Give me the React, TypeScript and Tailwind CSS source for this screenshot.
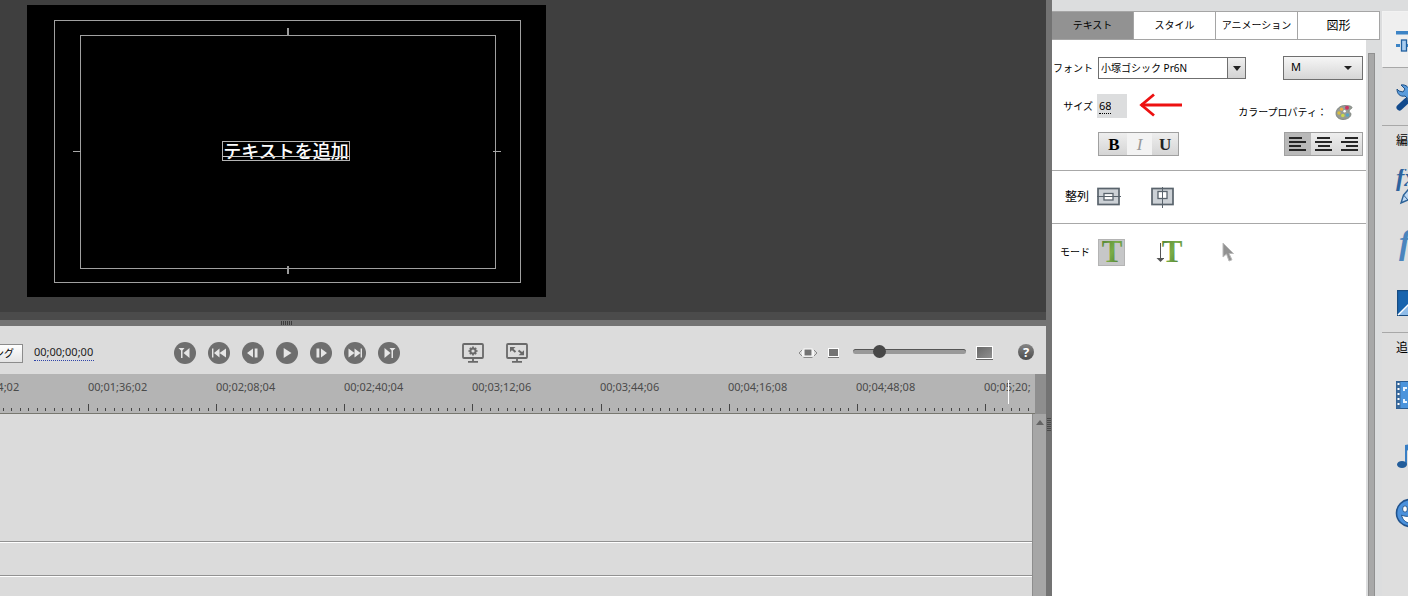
import React from "react";

const ui = "font-['Noto_Sans','Noto_Sans_CJK_JP',sans-serif]";

const ROUND = "flex size-[22px] shrink-0 items-center justify-center rounded-full bg-[#6e6e6e]";

function Transport({ label, children }: { label: string; children: React.ReactNode }) {
  return (
    <button type="button" aria-label={label} className={ROUND}>
      <svg width="22" height="22" viewBox="0 0 22 22" fill="#e6e6e6">
        {children}
      </svg>
    </button>
  );
}

function TransportControls() {
  return (
    <div className="flex gap-3">
      <Transport label="Go to in point">
        <path d="M4.500 6h6L8.500 8.500V16H7V8.500z" />
        <path d="M15.500 6v10L9.500 11z" />
      </Transport>
      <Transport label="Previous edit">
        <path d="M4 6.500h1.400v9H4zM11.500 6.500v9L6 11zM18 6.500v9L11.500 11z" />
      </Transport>
      <Transport label="Step back">
        <path d="M11 6.500v9L5 11zM12.700 6.500h2.800v9h-2.800z" />
      </Transport>
      <Transport label="Play">
        <path d="M7.700 6v10L15.500 11z" />
      </Transport>
      <Transport label="Step forward">
        <path d="M6.500 6.500h2.800v9H6.500zM11 6.500v9l6-4.500z" />
      </Transport>
      <Transport label="Next edit">
        <path d="M4.500 6.500v9L10.500 11zM10.500 6.500v9L16.500 11zM16.600 6.500H18v9h-1.400z" />
      </Transport>
      <Transport label="Go to out point">
        <path d="M17.500 6h-6l2 2.500V16H15V8.500z" />
        <path d="M6.500 6v10l6-5z" />
      </Transport>
    </div>
  );
}

function Monitor() {
  return (
    <section className="flex min-h-0 flex-[0_0_312px] bg-[#3f3f3f] pt-[5px] pl-[27px]">
      <div className="flex h-[292px] w-[519px] bg-black pt-[15px] pr-[25px] pb-[14px] pl-[27px]">
        <div className="flex flex-1 border border-[#a0a0a0] pt-[14px] pr-[24px] pb-[13px] pl-[25px]">
          <div className="relative flex flex-1 items-center justify-center border border-[#a0a0a0] pr-1">
            <i className="absolute -top-2 left-[206px] h-2 w-0.5 bg-[#9a9a9a]" />
            <i className="absolute -bottom-1.5 left-[206px] h-2 w-0.5 bg-[#9a9a9a]" />
            <i className="absolute top-[115px] -left-2 h-px w-2 bg-[#a8a8a8]" />
            <i className="absolute top-[115px] -right-1.5 h-px w-2 bg-[#a8a8a8]" />
            <div className="relative mb-0.5 flex h-5 items-center border border-[#b4b4b4] pb-0.5 text-lg leading-none font-medium whitespace-nowrap text-white font-['Noto_Sans_CJK_JP',sans-serif]">
              <span>テキストを追加</span>
              <i className="absolute inset-x-0 bottom-[3px] h-px bg-[#c8c8c8]" />
            </div>
          </div>
        </div>
      </div>
    </section>
  );
}

function PlaybackBar() {
  return (
    <div className="flex h-12 shrink-0 items-center bg-[#dcdcdc] pt-1.5 pr-3">
      <button
        type="button"
        className="-ml-[57px] flex h-[19px] w-20 shrink-0 items-center justify-end border border-[#8c8c8c] bg-gradient-to-b from-white to-[#e4e4e4] pr-2 text-[10px] whitespace-nowrap text-black"
      >
        レンダリング
      </button>
      <div className="ml-[11px] h-[15px] w-[60px] border-b border-dotted border-[#2f44a8] text-[11px] leading-[12px] whitespace-nowrap text-[#222]">
        00;00;00;00
      </div>
      <div className="ml-20">
        <TransportControls />
      </div>
      <div className="ml-[62px] flex gap-[22px]">
        <button type="button" aria-label="Playback settings">
          <svg width="22" height="20" viewBox="0 0 22 20" fill="none" stroke="#696969">
            <rect x="1" y="1" width="20" height="14" rx="1" strokeWidth="1.8" />
            <path d="M11 15v3M6 18.800h10" strokeWidth="1.8" />
            <circle cx="11" cy="8" r="2.600" strokeWidth="2" />
            <path d="M11 3.400v1.800M11 10.800v1.800M6.400 8h1.800M13.800 8h1.800M7.800 4.800l1.200 1.200M13 10l1.200 1.200M14.200 4.800L13 6M9 10l-1.200 1.200" strokeWidth="1.700" />
          </svg>
        </button>
        <button type="button" aria-label="Full screen">
          <svg width="22" height="20" viewBox="0 0 22 20" fill="none" stroke="#696969">
            <rect x="1" y="1" width="20" height="14" rx="1" strokeWidth="1.8" />
            <path d="M11 15v3M6 18.800h10" strokeWidth="1.8" />
            <path d="M5 5l4.500 4M12.500 7.500L17 11" strokeWidth="2" />
            <path d="M4 4h5.500L4 9zM18 12.200h-5.500l5.500-5z" fill="#696969" stroke="none" />
          </svg>
        </button>
      </div>
      <div className="ml-auto flex items-center">
        <button type="button" aria-label="Fit timeline">
          <svg width="20" height="12" viewBox="0 0 20 12">
            <rect x="6" y="2" width="8" height="7" fill="#747474" stroke="#fff" />
            <path d="M5.500 10.500h9M4 3L1 6l3 3M16 3l3 3-3 3" fill="none" stroke="#8a8a8a" />
            <path d="M4.800 3v6M15.200 3v6" stroke="#fff" strokeWidth="1.200" />
          </svg>
        </button>
        <button type="button" aria-label="Zoom out" className="ml-2.5">
          <svg width="11" height="12" viewBox="0 0 11 12">
            <rect x="0.500" y="1.500" width="10" height="8" fill="#747474" stroke="#fff" />
            <path d="M0 10.500h11" stroke="#777" />
          </svg>
        </button>
        <input
          type="range"
          aria-label="Timeline zoom"
          defaultValue={20}
          className="ml-3.5 mb-1 h-[5px] w-[113px] appearance-none rounded-full border-t border-[#555] bg-[#999] [&::-webkit-slider-thumb]:size-[13px] [&::-webkit-slider-thumb]:appearance-none [&::-webkit-slider-thumb]:rounded-full [&::-webkit-slider-thumb]:bg-[#484848]"
        />
        <button type="button" aria-label="Zoom in" className="ml-2.5">
          <svg width="17" height="14" viewBox="0 0 17 14">
            <defs>
              <linearGradient id="zoomIn" x2="1" y2="1">
                <stop stopColor="#666" />
                <stop offset="1" stopColor="#929292" />
              </linearGradient>
            </defs>
            <rect x="0.500" y="0.500" width="16" height="12" fill="url(#zoomIn)" stroke="#fff" />
            <path d="M0 13.500h17" stroke="#666" />
          </svg>
        </button>
        <button
          type="button"
          aria-label="Help"
          className="ml-[25px] mb-0.5 flex size-4 items-center justify-center rounded-full bg-gradient-to-b from-[#858585] to-[#4d4d4d] text-[13px] leading-4 font-bold text-white"
        >
          ?
        </button>
      </div>
    </div>
  );
}

const TIMES = [
  "00;01;04;02",
  "00;01;36;02",
  "00;02;08;04",
  "00;02;40;04",
  "00;03;12;06",
  "00;03;44;06",
  "00;04;16;08",
  "00;04;48;08",
  "00;05;20;",
];

function Ruler() {
  const step = 128.15 / 15;
  const ticks = Array.from({ length: 130 }, (_, i) => i - 10);
  return (
    <div className="flex h-10 shrink-0 bg-[#8e8e8e]">
      <div className="relative flex flex-1 flex-col overflow-hidden border-b border-[#77776f] bg-[#b4b4b4]">
        <div className="-ml-10 flex pt-[5px] text-[11px] leading-4 text-[#4a4a4a]">
          {TIMES.map((t) => (
            <span key={t} className="w-32 shrink-0">
              {t}
            </span>
          ))}
        </div>
        <svg width="1035" height="8" className="mt-auto mb-0.5 block shrink-0" stroke="#454545">
          {ticks.map((i) => {
            const x = Math.round(88 + i * step) + 0.5;
            return <path key={i} d={i % 15 === 0 ? `M${x} 1v7` : `M${x} 5v3`} />;
          })}
        </svg>
        <i className="absolute top-1.5 right-[26px] h-6 w-px bg-white" />
      </div>
      <div className="w-[11px]" />
    </div>
  );
}

function Timeline() {
  return (
    <div className="flex min-h-0 flex-1 bg-[#dbdbdb]">
      <div className="flex flex-1 flex-col">
        <div className="h-32 border-b border-[#929292]" />
        <div className="h-[34px] border-t border-b border-t-white border-b-[#929292]" />
        <div className="flex-1 border-t border-white" />
      </div>
      <div className="flex w-3.5 justify-center border-l border-[#8d8d8d] bg-[#a6a6a6] pt-1.5">
        <svg width="8" height="5" viewBox="0 0 8 5">
          <path d="M4 0l4 5H0z" fill="#646464" />
        </svg>
      </div>
    </div>
  );
}

const LABEL = "w-10 shrink-0 text-right text-[10px] whitespace-nowrap";

function Bars({ x }: { x: number[] }) {
  return (
    <svg width="18" height="14" viewBox="0 0 18 14" fill="#262626">
      {[0, 4, 8, 12].map((y, i) => {
        const w = i % 2 === 0 ? (i === 0 ? 13 : 12) : 17;
        return <rect key={y} x={x[i]} y={y} width={w} height="2" />;
      })}
    </svg>
  );
}

function GreenT() {
  return (
    <svg width="24" height="24" viewBox="0 0 24 24">
      <defs>
        <linearGradient id="green" x2="1" y2="1">
          <stop stopColor="#4d7c33" />
          <stop offset="0.500" stopColor="#79ad48" />
          <stop offset="1" stopColor="#416c2a" />
        </linearGradient>
      </defs>
      <text x="12" y="22" textAnchor="middle" fill="url(#green)" className="font-['Liberation_Serif',serif] text-[31px] font-bold">
        T
      </text>
    </svg>
  );
}

function Palette() {
  return (
    <svg width="18" height="17" viewBox="0 0 18 17">
      <path
        d="M10 1.500C5 1.500 1 5 1 9.500 1 13 4 15.500 8 15.500c4.500 0 8-2.500 8-5.500 0-1.500-2-1.500-2-3s3-2 3-3.500c0-1.300-3-2-7-2z"
        fill="#969b95"
        stroke="#777d77"
        strokeWidth=".8"
      />
      <circle cx="12" cy="3.800" r="2" fill="#c93460" />
      <circle cx="6.500" cy="5.200" r="1.600" fill="#efaa43" />
      <circle cx="4" cy="9" r="1.700" fill="#d7bd3f" />
      <circle cx="7.800" cy="11.500" r="1.800" fill="#cbd84a" />
      <circle cx="12.500" cy="11" r="1.800" fill="#55a4c4" />
      <circle cx="9.600" cy="7.300" r="1.200" fill="#fff" />
    </svg>
  );
}

const TAB = "h-full flex-1 border-r border-[#a5a5a5] text-[10px] whitespace-nowrap";

function TextPanel() {
  return (
    <div className="flex w-[328px] shrink-0 flex-col">
      <div role="tablist" className="flex h-[29px] shrink-0 border-t border-b border-[#a5a5a5] bg-white">
        <button type="button" role="tab" aria-selected="true" className="h-full flex-1 border-r border-[#a5a5a5] bg-[#929292] text-[10px]">
          テキスト
        </button>
        <button type="button" role="tab" className={TAB}>
          スタイル
        </button>
        <button type="button" role="tab" className={TAB}>
          アニメーション
        </button>
        <button type="button" role="tab" className="h-full flex-1 border-r border-[#a5a5a5] text-xs">
          図形
        </button>
      </div>
      <div className="flex min-h-0 flex-1">
        <div className="flex flex-1 flex-col bg-white">
          <div className="flex h-[131px] shrink-0 flex-col border-b border-[#a8a8a8] pt-4 pr-[3px] pl-px">
            <div className="flex h-6 items-center">
              <label htmlFor="font" className={LABEL}>
                フォント
              </label>
              <div className="ml-[5px] flex h-[22px] w-[148px] border border-[#6f6f6f]">
                <input
                  id="font"
                  defaultValue="小塚ゴシック Pr6N"
                  className="w-0 flex-1 bg-white pl-0.5 text-[10px] outline-none"
                />
                <button
                  type="button"
                  aria-label="Show fonts"
                  className="flex w-[18px] items-center justify-center border-l border-[#6f6f6f] bg-gradient-to-b from-[#efefef] to-[#d2d2d2]"
                >
                  <svg width="8" height="5" viewBox="0 0 8 5">
                    <path d="M0 0h8L4 5z" fill="#222" />
                  </svg>
                </button>
              </div>
              <div className="relative ml-auto h-6 w-20">
                <select
                  aria-label="Font style"
                  className="block size-full appearance-none border border-[#6f6f6f] bg-gradient-to-b from-[#f6f6f6] to-[#d6d6d6] pb-0.5 pl-[7px] text-[11px]"
                >
                  <option>M</option>
                </select>
                <svg width="8" height="4" viewBox="0 0 8 4" className="pointer-events-none absolute top-2.5 right-[11px]">
                  <path d="M0 0h8L4 4z" fill="#222" />
                </svg>
              </div>
            </div>
            <div className="mt-3.5 flex h-6 items-center">
              <label htmlFor="size" className={LABEL}>
                サイズ
              </label>
              <div className="ml-1 flex h-6 w-[30px] items-center bg-[#dcddde] pl-0.5">
                <input
                  id="size"
                  defaultValue="68"
                  className="h-[15px] w-3 border-b border-dotted border-black bg-transparent text-[11px] leading-[14px] outline-none"
                />
              </div>
              <svg width="44" height="24" viewBox="0 0 44 24" className="ml-3 mb-0.5" fill="none" stroke="#ed1111">
                <path d="M2 12h41" strokeWidth="3" />
                <path d="M15 1.500L2.500 12 15 22.500" strokeWidth="2.800" />
              </svg>
              <div className="mt-3 ml-auto flex items-center text-[10px] whitespace-nowrap">
                <span>カラープロパティ：</span>
                <button type="button" aria-label="Color properties" className="mr-2.5 ml-2">
                  <Palette />
                </button>
              </div>
            </div>
            <div className="mt-3.5 flex h-6 items-center justify-between pl-[45px]">
              <div className="flex h-6 w-[81px] border border-[#a0a0a0] bg-gradient-to-b from-[#eee] to-[#d5d5d5] font-['Liberation_Serif',serif] text-[17px] leading-none">
                <button type="button" className="flex-1 pl-0.5 font-bold">
                  B
                </button>
                <button type="button" className="flex-1 bg-[#f3f3f3] text-[#999] italic">
                  I
                </button>
                <button type="button" className="flex-1 font-bold text-[#222]">
                  U
                </button>
              </div>
              <div className="flex h-6 w-[79px] border border-[#a0a0a0] bg-gradient-to-b from-[#eee] to-[#d5d5d5]">
                <button type="button" aria-label="Align left" className="flex flex-1 items-center justify-center bg-[#b9b9b9]">
                  <Bars x={[0, 0, 0, 0]} />
                </button>
                <button type="button" aria-label="Align center" className="flex flex-1 items-center justify-center">
                  <Bars x={[2, 0, 3, 0]} />
                </button>
                <button type="button" aria-label="Align right" className="flex flex-1 items-center justify-center">
                  <Bars x={[5, 1, 6, 1]} />
                </button>
              </div>
            </div>
          </div>

          <div className="flex h-[53px] shrink-0 items-center border-b border-[#a8a8a8] pl-px">
            <span className="w-9 text-right text-xs">整列</span>
            <button type="button" aria-label="Center vertically" className="ml-2">
              <svg width="24" height="22" viewBox="0 0 24 22">
                <rect x="1" y="2.500" width="21" height="16" fill="#ccd1d6" stroke="#59636c" strokeWidth="1.700" />
                <rect x="7" y="7.500" width="9" height="6.500" fill="#fff" stroke="#59636c" strokeWidth="1.300" />
                <path d="M0 10.500h24" stroke="#59636c" />
              </svg>
            </button>
            <button type="button" aria-label="Center horizontally" className="ml-[30px]">
              <svg width="24" height="22" viewBox="0 0 24 22">
                <rect x="1" y="2.500" width="21" height="16" fill="#ccd1d6" stroke="#59636c" strokeWidth="1.700" />
                <rect x="7" y="5.500" width="9" height="7" fill="#fff" stroke="#59636c" strokeWidth="1.300" />
                <path d="M11.500 1v21" stroke="#59636c" />
              </svg>
            </button>
          </div>

          <div className="flex h-14 shrink-0 items-center pl-px">
            <span className="w-[37px] text-right text-[10px]">モード</span>
            <button
              type="button"
              aria-label="Horizontal text"
              className="ml-2 flex size-[27px] items-center justify-center border border-[#b4b4b4] bg-[#c6c7c8]"
            >
              <GreenT />
            </button>
            <button type="button" aria-label="Vertical text" className="ml-[31px] flex items-center">
              <svg width="8" height="24" viewBox="0 0 8 24" className="-mr-1">
                <path d="M4.500 3v16" stroke="#555" />
                <path d="M.5 18h8l-4 4z" fill="#555" />
              </svg>
              <GreenT />
            </button>
            <button type="button" aria-label="Select" className="ml-[38px]">
              <svg width="13" height="20" viewBox="0 0 13 20">
                <path d="M1 1v14l3.500-3 2.500 7 3-1.200-3-6.300h4.500z" fill="#929292" stroke="#bababa" />
              </svg>
            </button>
          </div>
        </div>
        <div className="w-3.5 bg-[#dcddde] pt-[13px] pr-[5px] pl-0.5">
          <div className="h-full border-x border-t border-[#909090] bg-[#a8a8a8]" />
        </div>
      </div>
    </div>
  );
}

function ToolRail() {
  return (
    <nav className="flex flex-1 flex-col overflow-hidden bg-[#dedede] text-xs whitespace-nowrap">
      <button type="button" aria-label="Adjust" className="flex h-[57px] shrink-0 items-center border-t border-b border-l border-t-[#f2f2f2] border-b-[#a8a8a8] border-l-[#f2f2f2] bg-[#efefef] pl-[13px]">
        <svg width="28" height="24" viewBox="0 0 28 24" className="shrink-0">
          <rect x="0" y="3" width="28" height="3.500" fill="#3c84c6" />
          <path d="M0 17.500h28" stroke="#3c84c6" strokeWidth="3" strokeDasharray="4 1.500" />
          <rect x="5.500" y="12" width="5" height="11" fill="#a9cdf0" stroke="#1f5f9f" strokeWidth="1.300" />
        </svg>
      </button>
      <button type="button" aria-label="Tools" className="flex h-[58px] shrink-0 items-center border-b border-[#a8a8a8] pl-3.5">
        <svg width="28" height="28" viewBox="0 0 28 28" className="shrink-0">
          <path d="M13 14l10 10" stroke="#3474b4" strokeWidth="5" strokeLinecap="round" />
          <path d="M5 2l4 4-2 3-4-1-2-2c0 5 3 8 8 7l4 4 4-4-4-4c1-4-3-8-8-7z" fill="#5a9cdc" stroke="#1d4f85" />
          <path d="M3.500 24.500l7-6.500" stroke="#124a8c" strokeWidth="6" strokeLinecap="round" />
          <path d="M11 17L24 4" stroke="#3c6590" strokeWidth="2.500" />
        </svg>
      </button>
      <h2 className="flex h-[30px] shrink-0 items-center pl-3.5">編集</h2>
      <button type="button" aria-label="Effects" className="flex h-[62px] shrink-0 items-center pl-3">
        <svg width="34" height="36" viewBox="0 0 34 36" className="shrink-0">
          <text x="2" y="17" fill="#2e639d" className="font-['Liberation_Serif',serif] text-[25px] font-bold italic">
            fx
          </text>
          <path d="M7 34l2.500-8L21 13l5 5-12 13z" fill="#bcd7f2" stroke="#2c6297" strokeWidth="1.400" />
          <path d="M9.500 26l4.500 5" stroke="#2c6297" />
        </svg>
      </button>
      <button type="button" aria-label="Transitions" className="flex h-14 shrink-0 items-center pl-3">
        <svg width="36" height="32" viewBox="0 0 36 32" className="shrink-0">
          <text x="5" y="24" fill="#4b85bd" className="font-['Liberation_Serif',serif] text-[34px] font-bold italic">
            fx
          </text>
        </svg>
      </button>
      <button type="button" aria-label="Fade" className="flex h-[59px] shrink-0 items-center border-b border-[#a8a8a8] pl-[15px]">
        <svg width="26" height="26" viewBox="0 0 26 26" className="shrink-0">
          <rect x=".6" y=".6" width="25" height="25" fill="#1864ae" stroke="#174b80" strokeWidth="1.200" />
          <path d="M1 25L25 1v24z" fill="#8fbce8" />
          <path d="M1 25L25 1" stroke="#fff" strokeWidth="1.500" />
        </svg>
      </button>
      <h2 className="flex h-[30px] shrink-0 items-center pl-3.5">追加</h2>
      <button type="button" aria-label="Titles" className="flex h-16 shrink-0 items-center pl-3.5">
        <svg width="34" height="28" viewBox="0 0 34 28" className="shrink-0">
          <rect x=".5" y=".5" width="33" height="27" fill="#4b94dc" stroke="#285b91" />
          <rect x=".5" y=".5" width="4" height="27" fill="#3a6a9c" />
          <path d="M2.500 2v25" stroke="#fff" strokeWidth="2" strokeDasharray="2 3" />
          <path d="M8 10V7h3M23 7h3v3M8 18v3h3M23 21h3v-3" fill="none" stroke="#e8f4ff" strokeWidth="2" />
        </svg>
      </button>
      <button type="button" aria-label="Music" className="flex h-[58px] shrink-0 items-center pl-[15px]">
        <svg width="24" height="26" viewBox="0 0 24 26" className="shrink-0">
          <path d="M8 2l13-2v18h-2V6l-9 1.500V21H8z" fill="#397fc5" />
          <ellipse cx="5" cy="21.500" rx="5" ry="3.500" fill="#235d9a" />
          <ellipse cx="17" cy="18" rx="4.500" ry="3.500" fill="#235d9a" />
        </svg>
      </button>
      <button type="button" aria-label="Graphics" className="flex h-14 shrink-0 items-center pl-[13px]">
        <svg width="30" height="30" viewBox="0 0 30 30" className="shrink-0">
          <circle cx="15" cy="15" r="13.500" fill="#4b91dc" stroke="#20528c" strokeWidth="1.600" />
          <ellipse cx="10" cy="11" rx="2.400" ry="3.200" fill="#fff" stroke="#285b91" />
          <ellipse cx="20" cy="11" rx="2.400" ry="3.200" fill="#fff" stroke="#285b91" />
          <path d="M6.500 17c3 2 14 2 17 0-1 5-4.500 8-8.500 8s-7.500-3-8.500-8z" fill="#fff" stroke="#285b91" />
        </svg>
      </button>
    </nav>
  );
}

export default function App() {
  return (
    <main className={`flex h-screen overflow-hidden text-black ${ui}`}>
      <div className="flex min-w-0 flex-1 flex-col">
        <Monitor />
        <div className="h-2 shrink-0 bg-[#4b4b4b]" />
        <div className="flex h-1.5 shrink-0 items-center bg-[#737373] pl-[281px]">
          <svg width="12" height="4" viewBox="0 0 12 4" stroke="#3c3c3c">
            <path d="M.5 0v4M2.500 0v4M4.500 0v4M6.500 0v4M8.500 0v4M10.500 0v4" />
          </svg>
        </div>
        <PlaybackBar />
        <Ruler />
        <Timeline />
      </div>
      <div className="flex w-1.5 shrink-0 items-end bg-[#737373] pb-[165px]">
        <svg width="6" height="13" viewBox="0 0 6 13" stroke="#4a4a4a">
          <path d="M1 .5h4M1 2.500h4M1 4.500h4M1 6.500h4M1 8.500h4M1 10.500h4M1 12.500h4" />
        </svg>
      </div>
      <aside className="flex w-[356px] shrink-0 flex-col bg-[#dcddde]">
        <div className="h-[11px] shrink-0" />
        <div className="flex min-h-0 flex-1 gap-0.5">
          <TextPanel />
          <ToolRail />
        </div>
      </aside>
    </main>
  );
}
